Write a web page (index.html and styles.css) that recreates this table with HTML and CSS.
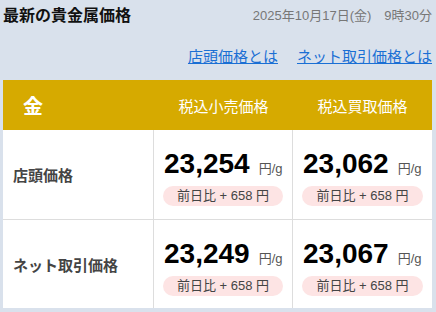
FILE: index.html
```html
<!DOCTYPE html>
<html lang="ja">
<head>
<meta charset="utf-8">
<link rel="stylesheet" href="styles.css">
</head>
<body>
<div class="page">
  <div class="top">
    <h1 class="title">最新の貴金属価格</h1>
    <div class="date">2025年10月17日(金)　9時30分</div>
  </div>
  <div class="links">
    <a href="#" class="link">店頭価格とは</a>
    <a href="#" class="link">ネット取引価格とは</a>
  </div>
  <div class="table">
    <div class="thead">
      <div class="th th-metal">金</div>
      <div class="th">税込小売価格</div>
      <div class="th">税込買取価格</div>
    </div>
    <div class="tbody">
      <div class="row-label">店頭価格</div>
      <div class="cell">
        <div class="price"><span class="num">23,254</span><span class="unit">円/g</span></div>
        <div class="diff">前日比 + 658 円</div>
      </div>
      <div class="cell">
        <div class="price"><span class="num">23,062</span><span class="unit">円/g</span></div>
        <div class="diff">前日比 + 658 円</div>
      </div>
      <div class="row-label">ネット取引価格</div>
      <div class="cell">
        <div class="price"><span class="num">23,249</span><span class="unit">円/g</span></div>
        <div class="diff">前日比 + 658 円</div>
      </div>
      <div class="cell">
        <div class="price"><span class="num">23,067</span><span class="unit">円/g</span></div>
        <div class="diff">前日比 + 658 円</div>
      </div>
    </div>
  </div>
</div>
</body>
</html>
```
FILE: styles.css
```css
html, body {
  margin: 0;
  padding: 0;
  background: #d9e1ec;
}
body {
  font-family: "Liberation Sans", "Noto Sans CJK JP", sans-serif;
  color: #222;
}
.page {
  padding: 0 4px 0 3px;
}
.top {
  height: 32px;
  display: flex;
  align-items: center;
  justify-content: space-between;
}
.title {
  margin: 0;
  font-size: 16px;
  font-weight: bold;
  color: #111;
  line-height: 20px;
}
.date {
  font-size: 13px;
  color: #777;
  line-height: 20px;
}
.links {
  margin-top: 15px;
  height: 20px;
  display: flex;
  justify-content: flex-end;
  gap: 19px;
}
.link {
  font-size: 15px;
  line-height: 20px;
  color: #1a6fd4;
  text-decoration: underline;
}
.table {
  margin-top: 13px;
  width: 429px;
}
.thead {
  display: grid;
  grid-template-columns: 151px 139px 139px;
  height: 50px;
  background: #d6aa00;
}
.th {
  display: flex;
  align-items: center;
  justify-content: center;
  color: #fff;
  font-size: 15px;
}
.th-metal {
  justify-content: flex-start;
  padding-left: 20px;
  font-size: 20px;
  font-weight: bold;
}
.tbody {
  display: grid;
  grid-template-columns: 150px 138px 139px;
  grid-template-rows: 89px 88px;
  gap: 1px;
  background: #dddddd;
}
.row-label {
  background: #fff;
  display: flex;
  align-items: center;
  padding-left: 10px;
  font-size: 15px;
  font-weight: bold;
  color: #444;
}
.cell {
  background: #fff;
  padding: 18px 9px 0 9px;
}
.price {
  height: 32px;
  line-height: 32px;
  padding-left: 1px;
  white-space: nowrap;
}
.num {
  font-size: 28px;
  font-weight: bold;
  color: #000;
}
.unit {
  font-size: 13px;
  color: #555;
  margin-left: 9px;
}
.diff {
  margin-top: 6px;
  height: 20px;
  line-height: 20px;
  border-radius: 10px;
  background: #fde4e4;
  text-align: center;
  font-size: 13px;
  color: #444;
}
```
